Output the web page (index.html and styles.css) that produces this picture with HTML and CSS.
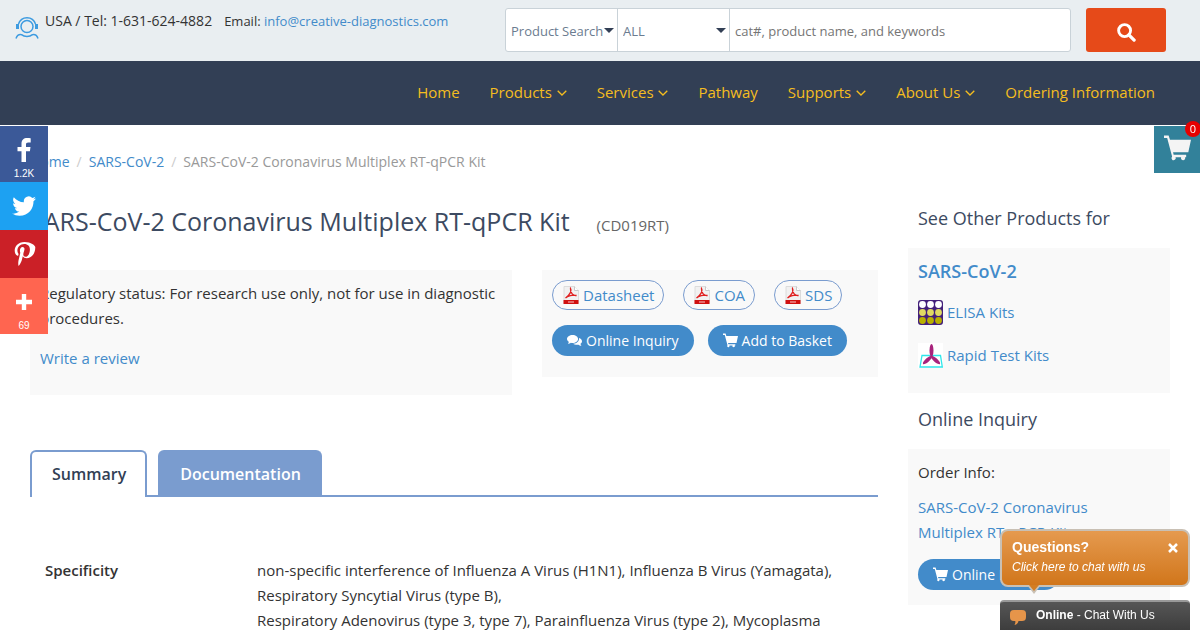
FILE: index.html
```html
<!DOCTYPE html>
<html lang="en">
<head>
  <meta charset="UTF-8" />
  <meta name="viewport" content="width=device-width, initial-scale=1" />
  <title>SARS-CoV-2 Coronavirus Multiplex RT-qPCR Kit</title>
  <link rel="stylesheet" href="styles.css">
</head>
<body>

  <!-- shared icons -->
  <svg class="sprite" aria-hidden="true">
    <symbol id="cart" viewBox="0 0 28 28">
      <path d="M0 1h4.800l1.400 4.500H28l-2.800 13H9.400l.6 2.500h13v2.500h-1.200a2.200 2.200 0 1 1-4 0H12a2.200 2.200 0 1 1-3.600-.6L3.300 3.500H0z"/>
    </symbol>
    <symbol id="pdf" viewBox="0 0 16 18">
      <path d="M1 .5h10.500L15.500 4.500v13H1z" fill="#f1f1f1" stroke="#dcdcdc"/>
      <path d="M11.500.5v4h4" fill="#fff" stroke="#c9c9c9"/>
      <path d="M7.500 2.500c1.500 2-.5 6.500-5 9.500 2-2 7-3.500 11-2.500-3 .5-6.500-2.500-6-7z" fill="none" stroke="#e02020" stroke-width="1.300"/>
      <path d="M.5 14h15v4H.5z" fill="#d01010"/>
      <path d="M5 16h6" stroke="#f3a0a0" stroke-width="1.300"/>
    </symbol>
    <symbol id="down" viewBox="0 0 10 6">
      <path d="M.7.7L5 5 9.300.7" fill="none" stroke="currentColor" stroke-width="1.300"/>
    </symbol>
  </svg>

  <header class="topbar">
    <div class="contact">
      <svg class="agent" viewBox="0 0 24 24" fill="none" stroke="#3d9be0" stroke-width="1.500">
        <circle cx="12" cy="10.500" r="6"/>
        <path d="M3.500 8C5 3.500 8 1.700 12 1.700S19 3.500 20.500 8"/>
        <path d="M2.500 8v5M21.500 8v5" stroke-width="3"/>
        <path d="M1 22.500c1-3 3-4.200 5.500-3.800 3 2.500 8 2.500 11 0 2.500-.4 4.500.8 5.500 3.800"/>
      </svg>
      <span class="tel">USA / Tel: 1-631-624-4882</span>
      <span class="email">Email: <a href="#">info@creative-diagnostics.com</a></span>
    </div>
    <form class="search">
      <div class="search-box">
        <div class="pick">
          <select aria-label="Search type"><option>Product Search</option></select>
        </div>
        <div class="pick">
          <select aria-label="Category"><option>ALL</option></select>
        </div>
        <input type="text" aria-label="Keywords" placeholder="cat#, product name, and keywords" />
      </div>
      <button type="button" class="search-btn" aria-label="Search">
        <svg viewBox="0 0 20 20" fill="none" stroke="#fff"><circle cx="8" cy="8" r="6.300" stroke-width="3"/><path d="M12.500 12.500l5.500 5.500" stroke-width="3.500" stroke-linecap="round"/></svg>
      </button>
    </form>
  </header>

  <nav class="nav">
    <a href="#">Home</a>
    <a href="#">Products <svg><use href="#down"/></svg></a>
    <a href="#">Services <svg><use href="#down"/></svg></a>
    <a href="#">Pathway</a>
    <a href="#">Supports <svg><use href="#down"/></svg></a>
    <a href="#">About Us <svg><use href="#down"/></svg></a>
    <a href="#">Ordering Information</a>
  </nav>

  <div class="page">
    <div class="breadcrumb">
      <a href="#">Home</a><i>/</i><a href="#">SARS-CoV-2</a><i>/</i><span>SARS-CoV-2 Coronavirus Multiplex RT-qPCR Kit</span>
    </div>

    <div class="columns">
      <main>
        <div class="title">
          <h1>SARS-CoV-2 Coronavirus Multiplex RT-qPCR Kit</h1>
          <span>(CD019RT)</span>
        </div>

        <div class="intro">
          <div class="panel status">
            <p>Regulatory status: For research use only, not for use in diagnostic procedures.</p>
            <a href="#">Write a review</a>
          </div>
          <div class="panel actions">
            <div class="files">
              <a class="pill" href="#"><svg><use href="#pdf"/></svg>Datasheet</a>
              <a class="pill" href="#"><svg><use href="#pdf"/></svg>COA</a>
              <a class="pill" href="#"><svg><use href="#pdf"/></svg>SDS</a>
            </div>
            <div class="buttons">
              <button type="button" class="btn">
                <svg viewBox="0 0 16 16"><path d="M6 2c3.300 0 5.800 2 5.800 4.300S9.300 10.600 6 10.600c-.7 0-1.300 0-1.900-.2C3.300 11 2 11.600.9 11.600c.6-.6 1-1.300 1-2.200C.8 8.600 0 7.500 0 6.300 0 4 2.700 2 6 2z"/><path d="M12.800 5.300c1.900.6 3.200 1.900 3.200 3.500 0 1.100-.6 2-1.600 2.700 0 .9.400 1.500 1 2.100-1.200 0-2.300-.5-3.100-1.100-2.300.4-4.400-.1-5.700-1.100 3.700-.2 6.600-2.700 6.200-6.100z"/></svg>
                Online Inquiry
              </button>
              <button type="button" class="btn"><svg><use href="#cart"/></svg>Add to Basket</button>
            </div>
          </div>
        </div>

        <div class="tabs">
          <button type="button" class="tab active">Summary</button>
          <button type="button" class="tab">Documentation</button>
        </div>

        <dl class="spec">
          <dt>Specificity</dt>
          <dd>non-specific interference of Influenza A Virus (H1N1), Influenza B Virus (Yamagata), Respiratory Syncytial Virus (type B),<br>Respiratory Adenovirus (type 3, type 7), Parainfluenza Virus (type 2), Mycoplasma</dd>
        </dl>
      </main>

      <aside>
        <h2>See Other Products for</h2>
        <div class="panel related">
          <h3><a href="#">SARS-CoV-2</a></h3>
          <a class="kit" href="#">
            <svg viewBox="0 0 25 25">
              <rect width="25" height="25" rx="3" fill="#43207a"/>
              <g fill="#fff"><circle cx="4.500" cy="4.500" r="3.400"/><circle cx="12.500" cy="4.500" r="3.400"/><circle cx="20.500" cy="4.500" r="3.400"/></g>
              <g fill="#e0da62"><circle cx="4.500" cy="12.500" r="3.400"/><circle cx="12.500" cy="12.500" r="3.400"/><circle cx="20.500" cy="12.500" r="3.400"/></g>
              <g fill="#b9b000"><circle cx="4.500" cy="20.500" r="3.400"/><circle cx="12.500" cy="20.500" r="3.400"/><circle cx="20.500" cy="20.500" r="3.400"/></g>
            </svg>
            ELISA Kits
          </a>
          <a class="kit" href="#">
            <svg viewBox="0 0 25 25">
              <rect width="25" height="25" fill="#fff"/>
              <path d="M4 12.500h18.500L24.300 24H2z" fill="none" stroke="#2fe6ea" stroke-width="1.300"/>
              <g fill="#a8237c"><ellipse cx="13.500" cy="7.500" rx="2" ry="6.500"/><ellipse cx="9.500" cy="17" rx="1.900" ry="6" transform="rotate(48 9.500 17)"/><ellipse cx="17.500" cy="17" rx="1.900" ry="6" transform="rotate(-48 17.500 17)"/></g>
            </svg>
            Rapid Test Kits
          </a>
        </div>

        <h2>Online Inquiry</h2>
        <div class="panel order">
          <p>Order Info:</p>
          <p><a href="#">SARS-CoV-2 Coronavirus<br>Multiplex RT-qPCR Kit</a></p>
          <button type="button" class="btn"><svg><use href="#cart"/></svg>Online Inquiry</button>
        </div>
      </aside>
    </div>
  </div>

  <div class="share">
    <a class="facebook" href="#" aria-label="Facebook">
      <svg viewBox="0 0 32 32"><path d="M18 28V17.300h3.900l.6-4.300H18v-2.500c0-1.300.5-2 2.200-2h2.500V4.300C22 4.200 20.700 4 19.200 4c-3.500 0-5.700 2-5.700 5.800V13H9.500v4.300h4V28z"/></svg>
      <span>1.2K</span>
    </a>
    <a class="twitter" href="#" aria-label="Twitter">
      <svg viewBox="0 0 32 32"><path d="M28 8.600a9.900 9.900 0 0 1-2.800.8 5 5 0 0 0 2.200-2.700c-1 .5-2 1-3.100 1.200a4.900 4.900 0 0 0-8.500 3.300c0 .4 0 .8.100 1.100-4-.2-7.700-2.100-10.100-5.100a4.900 4.900 0 0 0 1.500 6.600c-.8 0-1.500-.2-2.200-.6v.1c0 2.400 1.700 4.400 3.900 4.800a5 5 0 0 1-2.200.1c.6 2 2.400 3.400 4.600 3.400A9.900 9.900 0 0 1 4 23.600 13.900 13.900 0 0 0 11.500 25.800c9.200 0 14.200-7.700 14-14.600 1-.7 1.800-1.600 2.500-2.600z"/></svg>
    </a>
    <a class="pinterest" href="#" aria-label="Pinterest">
      <svg viewBox="0 0 32 32"><path d="M16.500 4C10 4 6.700 8.500 6.700 12.500c0 2.400.9 4.500 2.800 5.300.3.100.6 0 .7-.4l.3-1.100c.1-.4.100-.5-.2-.9-.5-.7-.9-1.500-.9-2.700 0-3.500 2.600-6.600 6.800-6.600 3.700 0 5.700 2.300 5.700 5.300 0 4-1.800 7.300-4.400 7.300-1.400 0-2.500-1.200-2.200-2.700.4-1.800 1.200-3.600 1.200-4.900 0-1.100-.6-2.100-1.900-2.100-1.500 0-2.700 1.500-2.700 3.600 0 1.300.4 2.200.4 2.200l-1.800 7.600c-.5 2.300-.1 5 0 5.300 0 .2.200.2.300.1.200-.2 2.200-2.700 2.900-5.200l1.100-4.400c.6 1.100 2.200 2 3.900 2 5.100 0 8.600-4.700 8.600-10.900C27.300 7.500 23 4 16.500 4z"/></svg>
    </a>
    <a class="more" href="#" aria-label="More">
      <svg viewBox="0 0 32 32"><path d="M18.200 13.800V8h-4.400v5.800H8v4.400h5.800V24h4.400v-5.800H24v-4.400z"/></svg>
      <span>69</span>
    </a>
  </div>

  <a class="basket" href="#" aria-label="Basket">
    <svg><use href="#cart"/></svg>
    <span>0</span>
  </a>

  <div class="chat">
    <div class="bubble">
      <button type="button" aria-label="Close"><svg viewBox="0 0 10 10"><path d="M1 1l8 8M9 1L1 9" stroke="#fff" stroke-width="2.500"/></svg></button>
      <b>Questions?</b>
      <em>Click here to chat with us</em>
      <svg class="tail" viewBox="0 0 14 10"><path d="M0 0l7 9 7-9z" fill="#c9c0b4"/><path d="M2 0l5 6 5-6z" fill="#d37d22"/></svg>
    </div>
    <div class="chat-bar">
      <svg viewBox="0 0 16 15"><path d="M4 0h8c3 0 4 1.500 4 4v3c0 3-1.500 4-4 4H8.500c-.5 2-1.500 3.500-4 4 .8-1.300 1-2.500.8-4H4c-3 0-4-1.500-4-4V4c0-2.500 1-4 4-4z" fill="#e6954a"/></svg>
      <span><b>Online</b> - Chat With Us</span>
    </div>
  </div>

</body>
</html>
```
FILE: styles.css
```css
* { box-sizing: border-box; }

body {
  margin: 0;
  font-family: "Open Sans", "Noto Sans", sans-serif;
  font-size: 15px;
  line-height: 25px;
  color: #333;
  background: #fff;
}

a { color: #428bca; text-decoration: none; }
h1, h2, h3, p, dl, dd { margin: 0; }
button, input, select { font-family: inherit; }
button { cursor: pointer; }

.sprite { position: absolute; width: 0; height: 0; }

/* top bar */
.topbar {
  display: flex;
  justify-content: space-between;
  height: 61px;
  padding: 8px 34px 0 15px;
  background: #e9eef1;
}

.contact {
  display: flex;
  font-size: 13px;
  line-height: 26px;
}

.agent {
  width: 24px;
  height: 24px;
  margin: 8px 6px 0 0;
}

.tel { font-size: 14px; }
.email { margin-left: 12px; }

.search {
  display: flex;
  gap: 15px;
  width: 661px;
}

.search-box {
  display: flex;
  flex: 1;
  height: 44px;
  background: #fff;
  border: 1px solid #c9d2d8;
  border-radius: 3px;
}

.pick {
  position: relative;
  width: 112px;
  border-right: 1px solid #c9d2d8;
}

.pick::after {
  content: "";
  position: absolute;
  top: 19px;
  right: 3px;
  border: 5px solid transparent;
  border-top-color: #323f55;
  border-bottom: 0;
  pointer-events: none;
}

.pick select {
  appearance: none;
  width: 100%;
  height: 100%;
  padding: 2px 0 0 5px;
  border: 0;
  background: none;
  color: #6b7c90;
  font-size: 13px;
}

.search-box input {
  flex: 1;
  min-width: 0;
  padding: 2px 5px 0;
  border: 0;
  background: none;
  font-size: 13px;
}

.search-btn {
  width: 80px;
  height: 44px;
  padding: 8px 0 0;
  border: 0;
  border-radius: 3px;
  background: #e64a19;
}

.search-btn svg { width: 19px; height: 19px; }

/* main menu */
.nav {
  display: flex;
  justify-content: flex-end;
  gap: 30px;
  padding: 19px 45px 20px;
  background: #323f55;
}

.nav a { color: #f5bd1f; }

.nav svg {
  width: 10px;
  height: 6px;
  margin-left: 1px;
  vertical-align: 2px;
}

/* page */
.page { padding: 24px 30px 0; }

.breadcrumb {
  font-size: 14px;
  color: #999;
}

.breadcrumb i {
  margin: 0 7px;
  font-style: normal;
  color: #ccc;
}

.columns {
  display: grid;
  grid-template-columns: minmax(0, 1fr) 262px;
  gap: 30px;
}

.title {
  display: flex;
  align-items: baseline;
  gap: 27px;
  padding-top: 29px;
  color: #666;
}

h1 {
  font-size: 25px;
  line-height: 36px;
  font-weight: 400;
  color: #3c4a61;
}

.intro {
  display: grid;
  grid-template-columns: minmax(0, 1fr) 336px;
  align-items: start;
  gap: 30px;
  margin-top: 31px;
}

.panel { background: #f9f9f9; }

.status { padding: 11px 10px 24px; }
.status p { margin-bottom: 15px; }

.actions { padding: 10px 10px 21px; }

.files, .buttons { display: flex; }
.files { gap: 19px; margin-bottom: 15px; }
.buttons { gap: 14px; }

.pill {
  display: flex;
  align-items: center;
  gap: 4px;
  height: 30px;
  padding: 0 9px 0 10px;
  border: 1px solid #7a9ccf;
  border-radius: 15px;
}

.pill svg { width: 16px; height: 18px; }

.btn {
  display: flex;
  align-items: center;
  gap: 4px;
  height: 31px;
  padding: 0 15px;
  border: 0;
  border-radius: 16px;
  background: #428bca;
  color: #fff;
  font-size: 14px;
}

.btn svg { width: 15px; height: 15px; fill: #fff; }

/* tabs */
.tabs {
  display: flex;
  gap: 11px;
  height: 47px;
  margin-top: 55px;
  border-bottom: 2px solid #7a9ccf;
}

.tab {
  height: 45px;
  padding: 0 19px 0 20px;
  border: 2px solid #7a9ccf;
  border-bottom: 0;
  border-radius: 6px 6px 0 0;
  background: #7a9ccf;
  color: #fff;
  font-size: 16px;
  font-weight: 600;
}

.tab.active {
  height: 47px;
  padding-bottom: 2px;
  background: #fff;
  color: #323f55;
}

.spec {
  display: grid;
  grid-template-columns: 212px 1fr;
  padding: 61px 15px 0;
}

.spec dt { font-weight: 600; }

/* sidebar */
aside h2 {
  padding: 29px 10px 15px;
  font-size: 18px;
  line-height: 30px;
  font-weight: 400;
  color: #3c4a61;
}

aside .panel + h2 { padding-top: 11px; }

.related { padding: 11px 10px 25px; }

.related h3 {
  margin-bottom: 16px;
  font-size: 18px;
  font-weight: 600;
}

.kit {
  display: flex;
  gap: 4px;
  margin-bottom: 18px;
}

.kit svg { width: 25px; height: 25px; }
.kit:last-child { margin-bottom: 0; }

.order { padding: 11px 10px 15px; }
.order p { margin-bottom: 10px; }
.order .btn { margin-top: 14px; }

/* share buttons */
.share {
  position: fixed;
  top: 126px;
  left: 0;
  width: 48px;
}

.share a {
  display: flex;
  flex-direction: column;
  align-items: center;
  gap: 2px;
  height: 48px;
  padding-top: 8px;
  color: #fff;
  font: 10px/12px "Liberation Sans", Arial, sans-serif;
}

.share svg { flex: none; width: 32px; height: 32px; fill: #fff; }

.share .facebook, .share .more { height: 56px; }
.share .facebook { background: #3b5998; }
.share .twitter { background: #1da1f2; }
.share .pinterest { background: #cb2027; }
.share .more { background: #ff6550; }

/* basket */
.basket {
  position: fixed;
  top: 126px;
  right: 0;
  width: 46px;
  height: 47px;
  padding: 8px 10px;
  background: #32819a;
}

.basket svg { width: 27px; height: 28px; fill: #f4f4f4; }

.basket span {
  position: absolute;
  top: -5px;
  right: -1px;
  width: 16px;
  height: 16px;
  border-radius: 50%;
  background: #e60000;
  color: #fff;
  font-size: 11px;
  line-height: 16px;
  text-align: center;
}

/* live chat */
.chat {
  position: fixed;
  right: 10px;
  bottom: 0;
  width: 190px;
  font: 12px/20px "Liberation Sans", Arial, sans-serif;
  color: #fff;
}

.bubble {
  position: relative;
  height: 58px;
  margin-bottom: 13px;
  padding: 6px 10px;
  border: 2px solid #c9c0b4;
  border-radius: 8px;
  background: linear-gradient(#e59a4f, #d1761b);
}

.bubble b, .bubble em { display: block; }
.bubble b { font-size: 14px; }

.bubble button {
  float: right;
  padding: 4px 0 0;
  border: 0;
  background: none;
}

.bubble button svg { width: 10px; height: 10px; }

.tail {
  position: absolute;
  top: 54px;
  left: 25px;
  width: 14px;
  height: 10px;
}

.chat-bar {
  display: flex;
  gap: 10px;
  height: 30px;
  padding: 3px 10px;
  border-top: 2px solid #999;
  border-radius: 4px 4px 0 0;
  background: linear-gradient(#565656, #3d3d3d);
}

.chat-bar svg { width: 16px; height: 15px; margin-top: 5px; }
```
